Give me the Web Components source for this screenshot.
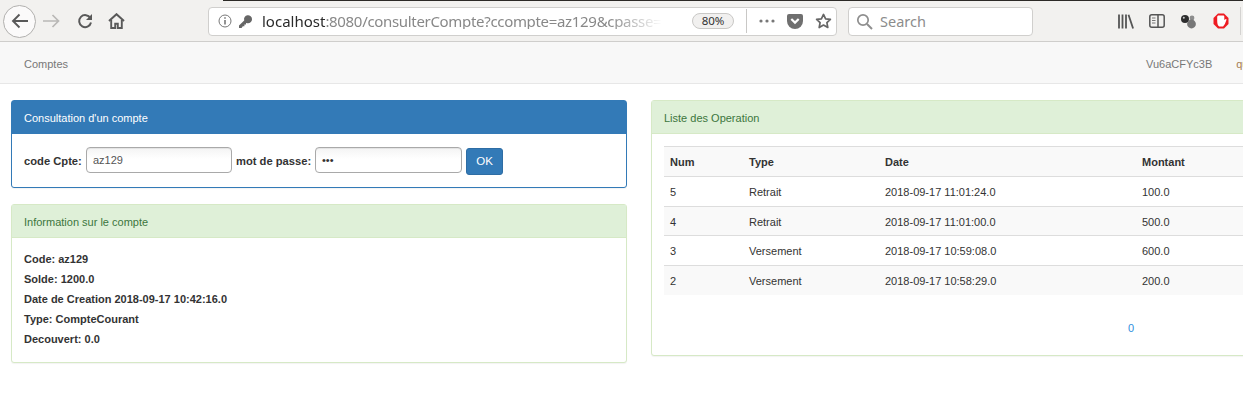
<!DOCTYPE html>
<html>
<head>
<meta charset="utf-8">
<title>Comptes</title>
<style>
    html, body { margin: 0; height: 420px; overflow: hidden; background: #fff; }
    body { font-family: "Liberation Sans", Arial, sans-serif; font-size: 11px; color: #333; line-height: 16px; }
</style>
</head>
<body>
<browser-bar></browser-bar>
<top-nav></top-nav>
<page-columns>
    <div slot="left">
        <ui-panel kind="primary" heading="Consultation d'un compte" pad="13px 12px 12px">
            <compte-form></compte-form>
        </ui-panel>
        <ui-panel kind="success" heading="Information sur le compte" pad="11px 12px 13px">
            <compte-info></compte-info>
        </ui-panel>
    </div>
    <div slot="right">
        <ui-panel kind="success" heading="Liste des Operation" pad="12px 12px 0">
            <operations-table></operations-table>
        </ui-panel>
    </div>
</page-columns>

<script>
class BrowserBar extends HTMLElement {
    constructor() {
        super();
        this.shadowDOM = this.attachShadow({mode: 'open'});
        this.shadowDOM.innerHTML = `
            <style>
                :host { display: block; height: 42px; background: #f2f1ef; box-sizing: border-box; border-bottom: 1px solid #cfcecc; font-family: "Noto Sans", sans-serif; }
                .shadowline { height: 1px; margin-left: 223px; background: #2c2a27; }
                .row { display: flex; align-items: center; height: 40px; margin-top: 0; }
                svg { display: block; flex: none; }
                .back { width: 33px; height: 33px; margin-left: 3px; border: 1px solid #b1b0ae; border-radius: 50%; background: #fbfafa; display: flex; align-items: center; justify-content: center; box-sizing: border-box; }
                .field { box-sizing: border-box; height: 29px; background: #fff; border: 1px solid #d0cfcd; border-radius: 4px; display: flex; align-items: center; }
                .url { width: 629px; margin-left: 83px; padding-left: 9px; font-size: 15px; color: #888; white-space: nowrap; }
                .url b { font-weight: 400; color: #2a2a2a; }
                .addr { width: 413px; margin-left: 9px;
                    -webkit-mask-image: linear-gradient(to right, #000 84%, transparent 97%); mask-image: linear-gradient(to right, #000 84%, transparent 97%); }
                .addr span { letter-spacing: -0.32px; }
                .zoom { flex: none; box-sizing: border-box; margin-left: 17px; width: 42px; height: 16px; border: 1px solid #c9c8c6; border-radius: 8px; background: #f1f0ef; color: #333; font-size: 11.5px; line-height: 14px; text-align: center; }
                .sep { flex: none; width: 1px; height: 24px; margin-left: 12px; background: #c9c8c6; }
                .search { width: 185px; margin-left: 11px; padding-left: 7px; font-size: 14.5px; color: #8c8c8c; }
                .search span { margin-left: 7px; }
            </style>
            <div class="shadowline"></div>
            <div class="row">
                <div class="back">
                    <svg width="18" height="16" viewBox="0 0 18 16"><path d="M17 8H2M8.5 1.5 2 8l6.5 6.5" fill="none" stroke="#595959" stroke-width="1.9"/></svg>
                </div>
                <svg style="margin-left:7px" width="17" height="14" viewBox="0 0 17 14"><path d="M0 7h15M9.5 1 15.5 7l-6 6" fill="none" stroke="#b9b8b6" stroke-width="1.7"/></svg>
                <svg style="margin-left:17px" width="16" height="16" viewBox="0 0 16 16"><path d="M13.4 5.2A6 6 0 1 0 14 9.5" fill="none" stroke="#595959" stroke-width="2"/><path d="M15 1v6H9z" fill="#595959"/></svg>
                <svg style="margin-left:15px" width="17" height="16" viewBox="0 0 17 16"><path d="M1 8 8.5 1.2 16 8" fill="none" stroke="#595959" stroke-width="2"/><path d="M3.2 7v8h4v-4.2h2.6V15h4V7" fill="none" stroke="#595959" stroke-width="1.9"/></svg>

                <div class="field url">
                    <svg width="14" height="14" viewBox="0 0 14 14"><circle cx="7" cy="7" r="6" fill="none" stroke="#777" stroke-width="1"/><path d="M7 6v4.5M7 3.2v1.6" stroke="#666" stroke-width="1.4"/></svg>
                    <svg style="margin-left:6px" width="15" height="15" viewBox="0 0 15 15"><path d="M1 14v-2.6l5.2-5A4 4 0 1 1 9.4 9.2L8 9v1.6H6.4v1.6H4.8L3.6 14z" fill="#666"/></svg>
                    <div class="addr"><b>localhost</b><span>:8080/consulterCompte?ccompte=az129&amp;cpasse=</span></div>
                    <div class="zoom">80%</div>
                    <div class="sep"></div>
                    <svg style="margin-left:12px" width="16" height="4" viewBox="0 0 16 4"><circle cx="2" cy="2" r="1.6" fill="#777"/><circle cx="8" cy="2" r="1.6" fill="#777"/><circle cx="14" cy="2" r="1.6" fill="#777"/></svg>
                    <svg style="margin-left:12px" width="16" height="15" viewBox="0 0 16 15"><path d="M2 0h12a2 2 0 0 1 2 2v5A8 8 0 0 1 0 7V2a2 2 0 0 1 2-2z" fill="#6f6f6f"/><path d="M4.3 5 8 8.6 11.7 5" fill="none" stroke="#fff" stroke-width="2.2"/></svg>
                    <svg style="margin-left:12px" width="17" height="16" viewBox="0 0 17 16"><path d="M8.5 1.4 10.6 5.8l4.8.6-3.5 3.3.9 4.8-4.3-2.4-4.3 2.4.9-4.8L1.6 6.4l4.8-.6z" fill="none" stroke="#666" stroke-width="1.7" stroke-linejoin="round"/></svg>
                </div>

                <div class="field search">
                    <svg width="17" height="17" viewBox="0 0 17 17"><circle cx="7" cy="7" r="5.2" fill="none" stroke="#8e8e8e" stroke-width="1.7"/><path d="M11 11l5 5" stroke="#8e8e8e" stroke-width="2"/></svg>
                    <span>Search</span>
                </div>

                <svg style="margin-left:85px" width="16" height="15" viewBox="0 0 16 15"><path d="M1 .5v14M4.5.5v14M8 .5v14M10.5.8l4.6 13.7" fill="none" stroke="#555" stroke-width="1.8"/></svg>
                <svg style="margin-left:15px" width="16" height="14" viewBox="0 0 16 14"><rect x=".8" y=".8" width="14.4" height="12.4" rx="2" fill="none" stroke="#555" stroke-width="1.5"/><path d="M9 1v12" stroke="#555" stroke-width="1.5"/><path d="M3 4h3.5M3 6.5h3.5M3 9h3.5" stroke="#777"/></svg>
                <svg style="margin-left:14px" width="18" height="15" viewBox="0 0 18 15"><circle cx="6" cy="5" r="4" fill="#2d2d2d"/><circle cx="13" cy="4" r="2.4" fill="#8d8d8d"/><circle cx="12.5" cy="10" r="4.4" fill="#777"/><circle cx="4.8" cy="3.8" r="1" fill="#ccc"/></svg>
                <svg style="margin-left:16px" width="16" height="16" viewBox="0 0 16 16"><path d="M5 .5h6L15.5 5v6L11 15.5H5L.5 11V5z" fill="#ee1c22"/><path d="M5.6 2.6h4.8c.5 0 .9.4.9.9V7l1.5-1 .8.6-1.7 4.4-1.8 2.4H6.2C5 13 4.2 11 4.2 8V4c0-.8.6-1.4 1.4-1.4z" fill="#fff"/></svg>
                <div style="flex:none;width:1px;height:28px;margin-left:11px;background:#d4d3d1"></div>
            </div>
        `;
    }
}

class TopNav extends HTMLElement {
    constructor() {
        super();
        this.shadowDOM = this.attachShadow({mode: 'open'});
        this.shadowDOM.innerHTML = `
            <style>
                :host { display: flex; align-items: center; box-sizing: border-box; height: 42px; padding: 2px 0 0 24px; background: #f8f8f8; border-bottom: 1px solid #e7e7e7; color: #777; white-space: nowrap; overflow: hidden; }
                .right { margin-left: auto; display: flex; gap: 24px; width: 97px; }
                .right span:last-child { color: #a67c52; }
            </style>
            <span>Comptes</span>
            <div class="right"><span>Vu6aCFYc3B</span><span>quitter</span></div>
        `;
    }
}

class PageColumns extends HTMLElement {
    constructor() {
        super();
        this.shadowDOM = this.attachShadow({mode: 'open'});
        this.shadowDOM.innerHTML = `
            <style>
                :host { display: grid; grid-template-columns: 640px 640px; padding-top: 16px; }
                .col { padding: 0 13px 0 11px; }
            </style>
            <div class="col"><slot name="left"></slot></div>
            <div class="col"><slot name="right"></slot></div>
        `;
    }
}

class UiPanel extends HTMLElement {
    constructor() {
        super();
        this.shadowDOM = this.attachShadow({mode: 'open'});
    }

    connectedCallback() {
        const kind = this.getAttribute('kind') || 'success';
        const heading = this.getAttribute('heading') || '';
        const pad = this.getAttribute('pad') || '12px';
        const colors = kind == 'primary'
            ? {border: '#337ab7', bg: '#337ab7', text: '#fff'}
            : {border: '#d6e9c6', bg: '#dff0d8', text: '#3c763d'};

        this.shadowDOM.innerHTML = `
            <style>
                :host { display: block; box-sizing: border-box; width: 616px; margin-bottom: 16px; background: #fff; border: 1px solid ${colors.border}; border-radius: 3px; box-shadow: 0 1px 1px rgba(0,0,0,.05); }
                .head { height: 33px; box-sizing: border-box; padding: 1px 12px 0; line-height: 32px; background: ${colors.bg}; color: ${colors.text}; border-bottom: 1px solid ${colors.border}; }
                .body { padding: ${pad}; }
            </style>
            <div class="head">${heading}</div>
            <div class="body"><slot></slot></div>
        `;
    }
}

class CompteForm extends HTMLElement {
    constructor() {
        super();
        this.shadowDOM = this.attachShadow({mode: 'open'});
        this.shadowDOM.innerHTML = `
            <style>
                :host { display: flex; align-items: center; height: 28px; }
                label { font-weight: 700; white-space: nowrap; font-size: 11.2px; }
                .input { box-sizing: border-box; height: 26px; margin: 0 4px 2px; padding: 0 6px; line-height: 24px; border: 1px solid #a9a9a9; border-radius: 4px; color: #555; background: linear-gradient(#f4f4f4, #fff 45%); box-shadow: inset 0 1px 1px rgba(0,0,0,.07); }
                .first { width: 58px; }
                .second { width: 75px; }
                .code { width: 146px; }
                .pass { width: 147px; color: #333; }
                button { box-sizing: border-box; width: 37px; height: 27px; padding: 0; font: inherit; font-size: 11.5px; color: #fff; background: #337ab7; border: 1px solid #2e6da4; border-radius: 3px; }
            </style>
            <label class="first">code Cpte:</label>
            <div class="input code">az129</div>
            <label class="second">mot de passe:</label>
            <div class="input pass">•••</div>
            <button type="button">OK</button>
        `;
    }
}

class CompteInfo extends HTMLElement {
    constructor() {
        super();
        this.shadowDOM = this.attachShadow({mode: 'open'});
        this.shadowDOM.innerHTML = `
            <style>
                :host { display: block; }
                div { height: 20px; line-height: 20px; font-weight: 700; }
            </style>
            <div>Code: az129</div>
            <div>Solde: 1200.0</div>
            <div>Date de Creation 2018-09-17 10:42:16.0</div>
            <div>Type: CompteCourant</div>
            <div>Decouvert: 0.0</div>
        `;
    }
}

class OperationsTable extends HTMLElement {
    constructor() {
        super();
        this.shadowDOM = this.attachShadow({mode: 'open'});
    }

    connectedCallback() {
        const rows = [
            ['5', 'Retrait', '2018-09-17 11:01:24.0', '100.0', 30],
            ['4', 'Retrait', '2018-09-17 11:01:00.0', '500.0', 29],
            ['3', 'Versement', '2018-09-17 10:59:08.0', '600.0', 30],
            ['2', 'Versement', '2018-09-17 10:58:29.0', '200.0', 29]
        ];
        const body = rows.map(r => `
            <tr style="height:${r[4]}px"><td>${r[0]}</td><td>${r[1]}</td><td>${r[2]}</td><td>${r[3]}</td></tr>
        `).join('');

        this.shadowDOM.innerHTML = `
            <style>
                :host { display: block; }
                table { width: 590px; table-layout: fixed; border-collapse: collapse; }
                th, td { box-sizing: border-box; padding: 0 6px; text-align: left; border-top: 1px solid #ddd; }
                thead tr { height: 30px; }
                thead th { background: #f9f9f9; border-bottom: 1px solid #ddd; }
                tbody tr:nth-child(even) td { background: #f9f9f9; padding-top: 2px; }
                .pages { box-sizing: border-box; height: 60px; display: flex; align-items: center; padding: 6px 0 0 464px; color: #2f8ede; }
            </style>
            <table>
                <colgroup><col style="width:79px"><col style="width:136px"><col style="width:257px"><col></colgroup>
                <thead><tr><th>Num</th><th>Type</th><th>Date</th><th>Montant</th></tr></thead>
                <tbody>${body}</tbody>
            </table>
            <div class="pages"><span>0</span></div>
        `;
    }
}

customElements.define("browser-bar", BrowserBar);
customElements.define("top-nav", TopNav);
customElements.define("page-columns", PageColumns);
customElements.define("ui-panel", UiPanel);
customElements.define("compte-form", CompteForm);
customElements.define("compte-info", CompteInfo);
customElements.define("operations-table", OperationsTable);
</script>
</body>
</html>
